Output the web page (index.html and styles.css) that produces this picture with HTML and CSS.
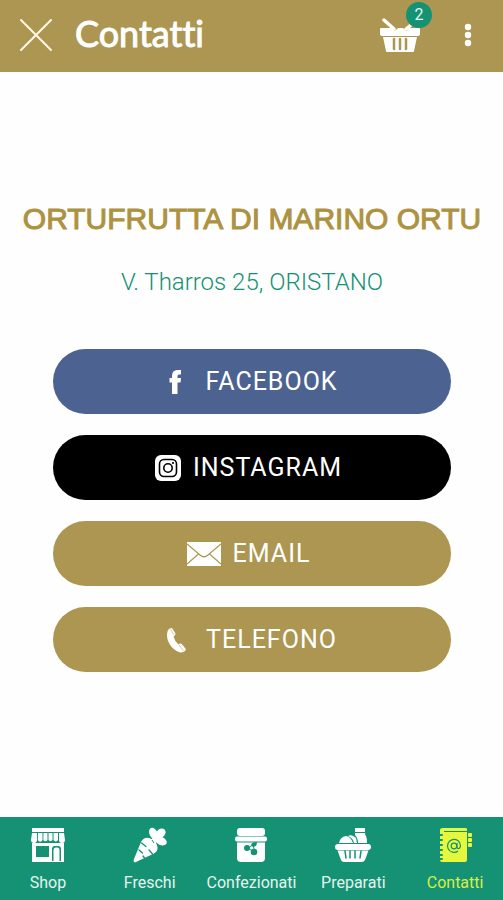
FILE: index.html
```html
<!DOCTYPE html>
<html lang="it">
  <head>
    <meta charset="UTF-8" />
    <meta name="viewport" content="width=device-width, initial-scale=1.0" />
    <title>Contatti</title>
    <link rel="stylesheet" href="styles.css">
  </head>
  <body>
    <header class="topbar">
      <button type="button" class="icon-btn close-btn" aria-label="Chiudi">
        <svg width="34" height="34" viewBox="0 0 34 34">
          <path d="M2 2 L32 32 M32 2 L2 32" fill="none" stroke="#fff8e6" stroke-width="2" stroke-linecap="round" />
        </svg>
      </button>
      <h1 class="topbar-title">Contatti</h1>
      <button type="button" class="icon-btn cart-btn" aria-label="Carrello">
        <svg width="40" height="34" viewBox="0 0 40 34">
          <path d="M4 2 L14 11" stroke="#fff" stroke-width="3.500" stroke-linecap="round" />
          <path d="M31 7 L26 11" stroke="#fff" stroke-width="3.500" stroke-linecap="round" />
          <path d="M1 10 H12 Q14 15 17 11 L18 10 H23 L24 11 Q27 15 29 10 H39 Q40 10 40 11 V16 Q40 18 38 18 H2 Q0 18 0 16 V11 Q0 10 1 10 Z" fill="#fff" />
          <path d="M3 19 H37 L34 33 Q34 34 33 34 H7 Q6 34 6 33 Z" fill="#fff" />
          <path d="M14 21 V31 M20 21 V31 M26 21 V31" stroke="#ad9651" stroke-width="2.500" stroke-linecap="round" />
        </svg>
        <span class="badge">2</span>
      </button>
      <button type="button" class="icon-btn menu-btn" aria-label="Menu">
        <svg width="8" height="24" viewBox="0 0 8 24">
          <circle cx="4" cy="4" r="3.200" fill="#fff" />
          <circle cx="4" cy="12" r="3.200" fill="#fff" />
          <circle cx="4" cy="20" r="3.200" fill="#fff" />
        </svg>
      </button>
    </header>

    <main class="content">
      <h2 class="shop-name">ORTUFRUTTA DI MARINO ORTU</h2>
      <p class="address">V. Tharros 25, ORISTANO</p>

      <div class="links">
        <a href="#" class="link facebook">
          <svg width="34" height="26" viewBox="0 0 34 26">
            <path d="M13 25 V13.500 H10.500 V9 H13 V7 Q13 1 18.500 1 H22 V5.500 H20 Q18.500 5.500 18.500 7.500 V9 H22 L21.500 13.500 H18.500 V25 Z" fill="#fff" />
          </svg>
          FACEBOOK
        </a>
        <a href="#" class="link instagram">
          <svg width="26" height="26" viewBox="0 0 26 26">
            <rect width="26" height="26" rx="6" fill="#fff" />
            <rect x="4.500" y="4.500" width="17" height="17" rx="4.500" fill="none" stroke="#000" stroke-width="1.600" />
            <circle cx="13" cy="13" r="4.200" fill="none" stroke="#000" stroke-width="1.600" />
            <circle cx="18" cy="8" r="1.100" fill="#000" />
          </svg>
          INSTAGRAM
        </a>
        <a href="#" class="link">
          <svg width="34" height="26" viewBox="0 0 34 26">
            <rect x="0" y="1" width="34" height="24" fill="#fff" />
            <path d="M0 3 L13 14 Q17 17.500 21 14 L34 3 M0 23 L11.500 13 M34 23 L22.500 13" fill="none" stroke="#ad9651" stroke-width="1.200" />
          </svg>
          EMAIL
        </a>
        <a href="#" class="link">
          <svg width="34" height="26" viewBox="0 0 34 26">
            <path d="M8 3 Q9.500 1 12 1 L15.500 6.500 Q15.500 8.500 13.500 9.500 Q14.500 14 18.500 17.500 Q20 16.200 21.500 16.800 L26 22.200 Q24.500 25.800 20 25.500 Q11.500 22.500 8 14 Q6 7.500 8 3 Z" fill="#fff" />
            <path d="M10.500 2 L14 8 M19 18 L23.500 24" stroke="#ad9651" stroke-width="0.500" />
          </svg>
          TELEFONO
        </a>
      </div>
    </main>

    <nav class="tabbar">
      <a href="#" class="tab">
        <svg width="36" height="36" viewBox="0 0 36 36">
          <path d="M2 1 H34 V5 H2 Z" fill="#fff" />
          <path d="M2 6 H7 V13 A3 3 0 0 1 1 13 Z M8 6 H12.500 V13 A2.500 2.500 0 0 1 7.800 13 Z M13.500 6 H17.500 V13 A2.300 2.300 0 0 1 13.300 13 Z M18.500 6 H22.500 V13 A2.300 2.300 0 0 1 18.500 13 Z M23.500 6 H28 V13 A2.500 2.500 0 0 1 23.500 13 Z M29 6 H34 L35 13 A3 3 0 0 1 29 13 Z" fill="#fff" />
          <path fill-rule="evenodd" d="M2 16 H34 V35 H2 Z M6 19 V30 H19 V19 Z M22 34 H31 V22 Q31 19 28 19 H25 Q22 19 22 22 Z" fill="#fff" />
          <path d="M23.500 34 V23 Q23.500 20.500 26 20.500 H27 Q29.500 20.500 29.500 23 V34 Z" fill="#fff" />
        </svg>
        Shop
      </a>
      <a href="#" class="tab">
        <svg width="36" height="36" viewBox="0 0 36 36">
          <path d="M2 35 Q1 34 2 32 L9 15 Q12 10 17 11 Q24 13 25.500 20 Q26 25 21 27 L4 35 Q3 35.500 2 35 Z" fill="#fff" />
          <path d="M9.500 16 L14 19.500 M7 23 L10.500 26 M20.500 27 L17 23 M12.500 31 L11 29" stroke="#159273" stroke-width="1.300" stroke-linecap="round" />
          <path d="M19 17 L29 7" stroke="#fff" stroke-width="6" />
          <ellipse cx="21.500" cy="6.500" rx="4" ry="6" transform="rotate(-25 21.500 6.500)" fill="#fff" />
          <ellipse cx="29" cy="6" rx="5" ry="4.200" transform="rotate(-45 29 6)" fill="#fff" />
          <ellipse cx="29" cy="14" rx="6" ry="4" transform="rotate(25 29 14)" fill="#fff" />
          <path d="M20 13 L22 16" stroke="#159273" stroke-width="1" />
        </svg>
        Freschi
      </a>
      <a href="#" class="tab">
        <svg width="36" height="36" viewBox="0 0 36 36">
          <rect x="4" y="1" width="28" height="8" rx="3" fill="#fff" />
          <rect x="2" y="9.500" width="32" height="5" rx="2" fill="#fff" />
          <path d="M4 15.500 H32 V31 Q32 35 28 35 H8 Q4 35 4 31 Z" fill="#fff" />
          <path d="M14 21 L20 18 L22 25 Z" fill="none" stroke="#159273" />
          <circle cx="14" cy="21" r="3" fill="#159273" />
          <circle cx="21" cy="25" r="3.300" fill="#159273" />
          <path d="M18 18 Q19 14.500 24 15 Q24 19.500 20 20 Z" fill="#159273" />
        </svg>
        Confezionati
      </a>
      <a href="#" class="tab">
        <svg width="36" height="36" viewBox="0 0 36 36">
          <path d="M4 16 Q5 10 11 9 Q16 10 18 16 Z M13 9 Q17 7 21 11 L22 16 H19 Q18 11 13 9 Z" fill="#fff" />
          <path d="M20 1 H30 V5 Q30 8 31 9 Q32 11 32 16 H23 Q23 11 20 8 Z" fill="#fff" />
          <path d="M20 5.500 H30" stroke="#159273" stroke-width="1" />
          <rect x="0" y="17" width="36" height="6" rx="3" fill="#fff" />
          <path d="M2.500 23.500 H33.500 L30 33 Q29 35 27 35 H9 Q7 35 6 33 Z" fill="#fff" />
          <path d="M10 24 L11 31 M15 24 V31 M20 24 V31 M26 24 L25 31" stroke="#159273" stroke-width="1.500" stroke-linecap="round" />
        </svg>
        Preparati
      </a>
      <a href="#" class="tab active">
        <svg width="36" height="36" viewBox="0 0 36 36">
          <path d="M6 1 H29 Q30 1 30 2 V4 H7 V5 H30 V33 Q30 35 28 35 H5 Q3 35 3 33 V3 Q3 1 6 1 Z" fill="#e6f83c" />
          <rect x="31" y="6" width="4" height="4" rx="1" fill="#e6f83c" />
          <rect x="31" y="11" width="4" height="4" rx="1" fill="#e6f83c" />
          <rect x="31" y="16" width="4" height="4" rx="1" fill="#e6f83c" />
          <path d="M3 8 H5 M3 13 H5 M3 18 H5 M3 23 H5 M3 28 H5 M3 32 H5" stroke="#159273" stroke-width="2" stroke-linecap="round" />
          <circle cx="17" cy="19" r="2.800" fill="none" stroke="#159273" stroke-width="1.200" />
          <path d="M20 16 V20 Q20 22 22 21.500 Q23.500 20.500 23.500 18.500 A6.500 6.500 0 1 0 21 24" fill="none" stroke="#159273" stroke-width="1.200" />
        </svg>
        Contatti
      </a>
    </nav>
  </body>
</html>
```

FILE: styles.css
```css
* {
  box-sizing: border-box;
}

body {
  margin: 0;
  min-height: 100vh;
  display: flex;
  flex-direction: column;
  background-color: #fefefe;
  font-family: Roboto, 'Liberation Sans', sans-serif;
  overflow-x: hidden;
}

a {
  color: inherit;
  text-decoration: none;
}

svg {
  display: block;
  flex: none;
}

.topbar {
  display: flex;
  align-items: center;
  height: 72px;
  padding: 0 31px 2px 19px;
  background-color: #ad9651;
  color: #fff;
}

.icon-btn {
  position: relative;
  padding: 0;
  border: none;
  background: none;
  cursor: pointer;
}

.topbar-title {
  flex: 1;
  margin: 0 0 0 22px;
  padding-bottom: 4px;
  font-family: Lato, sans-serif;
  font-size: 36px;
  font-weight: 400;
  font-variant-ligatures: none;
  line-height: 40px;
  -webkit-text-stroke: 1px #fff;
}

.menu-btn {
  margin-left: 44px;
}

.badge {
  position: absolute;
  top: -16px;
  right: -12px;
  width: 26px;
  height: 26px;
  border-radius: 50%;
  background-color: #159273;
  color: #e4f5ee;
  font-family: Roboto, sans-serif;
  font-size: 16px;
  line-height: 26px;
  text-align: center;
}

.content {
  flex: 1;
  display: flex;
  flex-direction: column;
  justify-content: center;
  padding: 0 52px 16px 53px;
  text-align: center;
}

.shop-name {
  margin: 0 -52px;
  color: #ad9240;
  font-family: 'Liberation Sans', Arial, sans-serif;
  font-size: 30px;
  font-weight: 400;
  line-height: 36px;
  -webkit-text-stroke: 1px #ad9240;
}

.address {
  margin: 28px 0 50px;
  color: #159273;
  font-size: 24px;
  font-weight: 300;
  line-height: 34px;
}

.links {
  display: flex;
  flex-direction: column;
  gap: 21px;
}

.link {
  display: flex;
  align-items: center;
  justify-content: center;
  gap: 12px;
  height: 65px;
  padding-right: 7px;
  border-radius: 33px;
  background-color: #ad9651;
  color: #fff;
  font-size: 25px;
  letter-spacing: 1px;
}

.facebook {
  background-color: #4c6391;
}

.instagram {
  background-color: #000;
}

.tabbar {
  display: flex;
  height: 83px;
  margin: 0 -3px;
  padding-top: 10px;
  background-color: #159273;
  color: #e4f5ee;
}

.tab {
  flex: 1;
  display: flex;
  flex-direction: column;
  align-items: center;
  gap: 10px;
  font-size: 16px;
  line-height: 20px;
}

.active {
  color: #d5ef48;
}
```
